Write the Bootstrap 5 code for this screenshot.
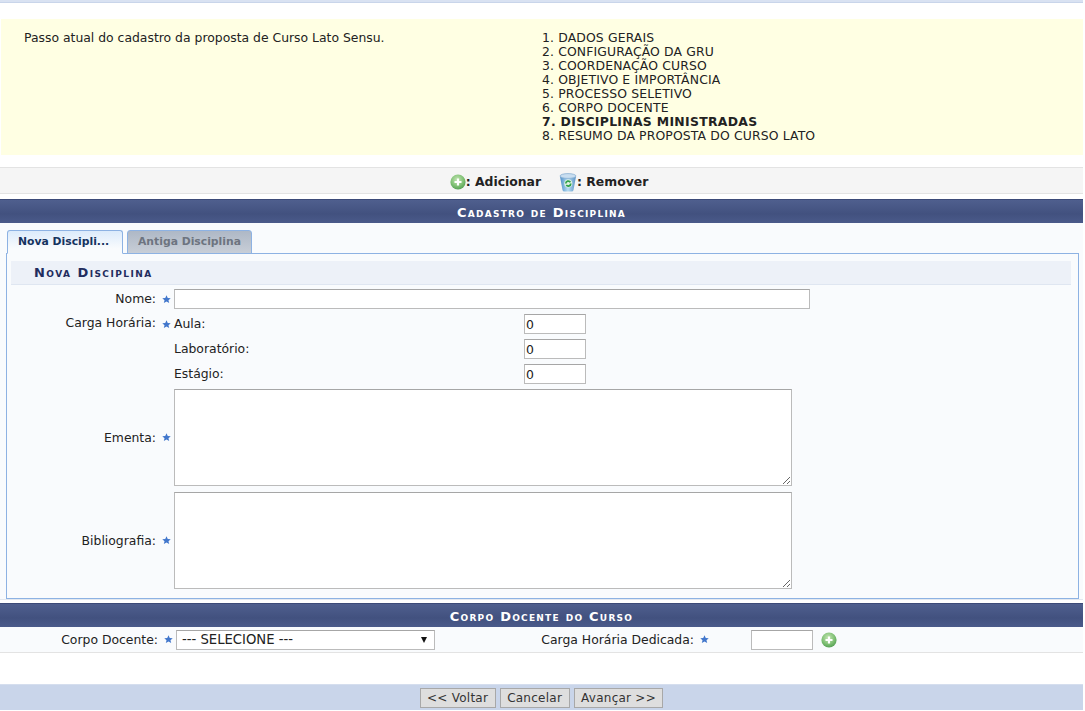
<!DOCTYPE html>
<html lang="pt-BR">
<head>
<meta charset="utf-8">
<title>Cadastro de Disciplina</title>
<link href="https://cdn.jsdelivr.net/npm/bootstrap@5.3.0/dist/css/bootstrap.min.css" rel="stylesheet">
<style>
html,body{background:#fff;overflow:hidden}
body{font-family:"DejaVu Sans",Verdana,sans-serif;font-size:12.4px;line-height:14px;color:#222;width:1083px;height:711px}
.topline{height:3px;background:#d9e2f2;border-bottom:1px solid #c9d5ea}
.stepbox{margin:16px 0 12px 1px;height:136px;background:#ffffe3;padding:12px 23px}
.stepintro{width:518px}
.steplist{margin:0;padding:0;list-style:none;letter-spacing:.14px}
.stepcur{font-weight:700;letter-spacing:.32px}
.toolbar{height:27px;background:#f5f5f5;border-top:1px solid #e3e3e3;border-bottom:1px solid #e3e3e3;font-weight:700;font-size:12.4px;margin-bottom:5px;gap:18px;padding:3px 0 0 15px}
.barhead{height:24px;background:linear-gradient(#4f5f8e,#42517f 60%,#4a5a8a);color:#fff;font-weight:700;font-variant:small-caps;letter-spacing:1.25px;font-size:13px;line-height:25px;text-align:center;border-top:1px solid #3c4a78}
.panel{background:#f9fbfd;height:377px;padding:7px 4px 0 6px;margin-bottom:3px;border-bottom:1px solid #e3e8f0}
.tabstrip{height:24px;gap:4px;padding-left:1px;margin-bottom:-1px;position:relative;z-index:1}
.tabitem{height:24px;border:1px solid #8db2e3;border-radius:3px 3px 0 0;font-weight:700;font-size:10.8px;padding:4px 10px;white-space:nowrap}
.tabitem.on{width:116px;background:linear-gradient(#dcebfb,#f9fbfd 80%);border-bottom-color:#f9fbfd;color:#15335f}
.tabitem.off{width:125px;background:linear-gradient(#aeb8c6,#c8ced7);color:#6d7480}
.tabbody{height:346px;border:1px solid #8db2e3;padding:7px 7px 0 4px}
.subhead{height:24px;background:#edf1f8;border-bottom:1px solid #dfe6f1;color:#222c5e;font-weight:700;font-variant:small-caps;letter-spacing:1.45px;font-size:13px;line-height:24px;padding-left:23px;margin-bottom:4px}
.lbl{width:145px;text-align:right;flex:none}
.staricon{flex:none;width:18px;padding-left:2px;display:flex;justify-content:center}
.fld{border:1px solid #bbb;border-top-color:#a6a6a6;background:#fff;border-radius:0;outline:0;padding:1px;font:12.4px "DejaVu Sans",Verdana,sans-serif;color:#222;display:block}
.fld-name{width:636px;height:20px}
.fld-small{width:62px;height:20px}
.fld-area{width:618px;height:97px}
.formline{height:20px}
.hourblock{margin-top:5px}
.hourhead{padding-top:2px}
.hourstar{padding-top:6px;align-items:flex-start}
.hourlist{width:412px}
.hourlabel{width:350px}
.hourrow{height:20px;margin-bottom:5px}
.arearow{height:97px;margin-bottom:6px}
.docrow{height:26px;background:#f9fbfd;border-bottom:1px solid #e3e3e3}
.doclbl{width:158px;text-align:right;flex:none}
.fld-sel{width:259px;height:20px;appearance:none;padding:0 5px;font-size:13.2px;line-height:18px;background:#fff url("data:image/svg+xml,%3Csvg xmlns='http://www.w3.org/2000/svg' width='6' height='6'%3E%3Cpath d='M0 0h6L3 6z' fill='%23111'/%3E%3C/svg%3E") no-repeat right 7px center}
.cargalbl{width:259px;text-align:right;flex:none}
.cargastar{margin-right:39px}
.footbar{height:26px;background:#c9d5ea;margin-top:31px;gap:4px;border-top:1px solid #d5deee}
.actbtn{height:20px;border:1px solid #a8a8a8;background:#dedede;border-radius:0;color:#333;font:12px/16px "DejaVu Sans",Verdana,sans-serif;padding:0 6.5px;white-space:nowrap;letter-spacing:.25px}
</style>
</head>
<body>
<svg width="0" height="0" class="d-block">
<defs>
<radialGradient id="gradgreen" cx="45%" cy="35%" r="70%"><stop offset="0" stop-color="#c4e6b4"/><stop offset=".6" stop-color="#7fc074"/><stop offset="1" stop-color="#4d9a4e"/></radialGradient>
<linearGradient id="gradbin" x1="0" x2="1" y1="0" y2="0"><stop offset="0" stop-color="#4f8fc8"/><stop offset=".5" stop-color="#b6dcf2"/><stop offset="1" stop-color="#5c93c6"/></linearGradient>
<symbol id="plusicon" viewBox="0 0 16 16"><circle cx="8" cy="8" r="7.6" fill="url(#gradgreen)"/><path d="M8 4.500v7M4.500 8h7" stroke="#fff" stroke-width="2.200"/></symbol>
<symbol id="starmark" viewBox="0 0 10 10"><path d="M5 .3l1.400 3 3.300.3-2.500 2.100.8 3.300L5 7.200 2 9l.8-3.300L.3 3.600l3.300-.3z" fill="#4277cc"/></symbol>
<symbol id="binicon" viewBox="0 0 18 19"><path d="M1 3.500h16L14.500 17q-.2 1.500-2 1.500h-7q-1.800 0-2-1.500z" fill="url(#gradbin)"/><ellipse cx="9" cy="3" rx="8" ry="2.400" fill="#c9def0" stroke="#7fa9cf" stroke-width=".7"/><circle cx="9.300" cy="10.500" r="4" fill="#dff0e2"/><path d="M6.800 10.500a2.500 2.500 0 0 1 4.600-1.300M11.800 10.500a2.500 2.500 0 0 1-4.500 1.500" fill="none" stroke="#2fa24a" stroke-width="1.700"/></symbol>
</defs>
</svg>
<div class="topline"></div>
<div class="stepbox d-flex">
  <div class="stepintro">Passo atual do cadastro da proposta de Curso Lato Sensu.</div>
  <ol class="steplist">
    <li>1. DADOS GERAIS</li>
    <li>2. CONFIGURAÇÃO DA GRU</li>
    <li>3. COORDENAÇÃO CURSO</li>
    <li>4. OBJETIVO E IMPORTÂNCIA</li>
    <li>5. PROCESSO SELETIVO</li>
    <li>6. CORPO DOCENTE</li>
    <li class="stepcur">7. DISCIPLINAS MINISTRADAS</li>
    <li>8. RESUMO DA PROPOSTA DO CURSO LATO</li>
  </ol>
</div>
<div class="toolbar d-flex justify-content-center align-items-center">
  <span class="d-flex align-items-center"><svg width="16" height="16"><use href="#plusicon"/></svg>: Adicionar</span>
  <span class="d-flex align-items-center"><svg width="18" height="19"><use href="#binicon"/></svg>: Remover</span>
</div>
<div class="barhead">Cadastro de Disciplina</div>
<div class="panel">
  <div class="tabstrip d-flex">
    <div class="tabitem on">Nova Discipli...</div>
    <div class="tabitem off">Antiga Disciplina</div>
  </div>
  <div class="tabbody">
    <div class="subhead">Nova Disciplina</div>
    <div class="formline d-flex align-items-center">
      <div class="lbl">Nome:</div><div class="staricon"><svg width="9" height="9"><use href="#starmark"/></svg></div>
      <input class="fld fld-name" type="text">
    </div>
    <div class="hourblock d-flex">
      <div class="lbl hourhead">Carga Horária:</div><div class="staricon hourstar"><svg width="9" height="9"><use href="#starmark"/></svg></div>
      <div class="hourlist">
        <div class="hourrow d-flex align-items-center"><div class="hourlabel">Aula:</div><input class="fld fld-small" type="text" value="0"></div>
        <div class="hourrow d-flex align-items-center"><div class="hourlabel">Laboratório:</div><input class="fld fld-small" type="text" value="0"></div>
        <div class="hourrow d-flex align-items-center"><div class="hourlabel">Estágio:</div><input class="fld fld-small" type="text" value="0"></div>
      </div>
    </div>
    <div class="arearow d-flex align-items-center">
      <div class="lbl">Ementa:</div><div class="staricon"><svg width="9" height="9"><use href="#starmark"/></svg></div>
      <textarea class="fld fld-area"></textarea>
    </div>
    <div class="arearow d-flex align-items-center">
      <div class="lbl">Bibliografia:</div><div class="staricon"><svg width="9" height="9"><use href="#starmark"/></svg></div>
      <textarea class="fld fld-area"></textarea>
    </div>
  </div>
</div>
<div class="barhead">Corpo Docente do Curso</div>
<div class="docrow d-flex align-items-center">
  <div class="doclbl">Corpo Docente:</div><div class="staricon"><svg width="9" height="9"><use href="#starmark"/></svg></div>
  <select class="fld fld-sel"><option>--- SELECIONE ---</option></select>
  <div class="cargalbl">Carga Horária Dedicada:</div><div class="staricon cargastar"><svg width="9" height="9"><use href="#starmark"/></svg></div>
  <input class="fld fld-small" type="text">
  <svg width="16" height="16" class="ms-2"><use href="#plusicon"/></svg>
</div>
<div class="footbar d-flex justify-content-center align-items-center">
  <button class="actbtn" type="button">&lt;&lt; Voltar</button>
  <button class="actbtn" type="button">Cancelar</button>
  <button class="actbtn" type="button">Avançar &gt;&gt;</button>
</div>
</body>
</html>
